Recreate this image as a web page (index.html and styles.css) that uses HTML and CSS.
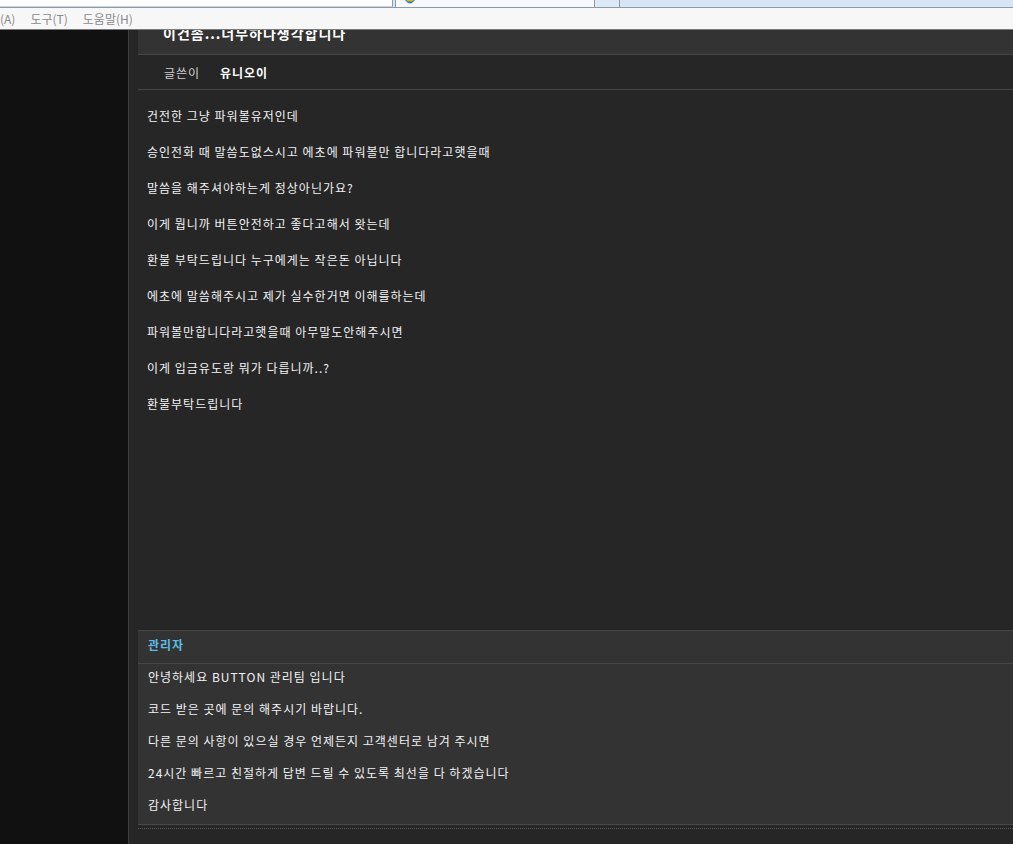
FILE: index.html
```html
<!DOCTYPE html>
<html>
<head>
    <link rel="stylesheet" href="styles.css">
</head>
<body>
    <div class="chrome">
        <div class="address"></div>
        <div class="tab">
            <svg class="tab-icon" width="12" height="6" viewBox="0 0 12 6"><path d="M1 0 Q6 7 11 0" fill="#2f7fd0"/><path d="M2 0 Q6 3 10 0" fill="#f0b400"/></svg>
        </div>
        <div class="tab-new"></div>
        <div class="tab-rest"></div>
    </div>
    <div class="menubar">
        <span class="menu-item first">(A)</span>
        <span class="menu-item">도구(T)</span>
        <span class="menu-item">도움말(H)</span>
    </div>

    <div class="page">
        <div class="sidebar"></div>
        <div class="main">
            <div class="title">
                <h2>이건좀...너무하나생각합니다</h2>
            </div>
            <div class="author">
                <span class="author-label">글쓴이</span>
                <span class="author-name">유니오이</span>
            </div>
            <div class="content">
                <p>건전한 그냥 파워볼유저인데</p>
                <p>승인전화 때 말씀도없스시고 에초에 파워볼만 합니다라고햇을때</p>
                <p>말씀을 해주셔야하는게 정상아닌가요?</p>
                <p>이게 뭡니까 버튼안전하고 좋다고해서 왓는데</p>
                <p>환불 부탁드립니다 누구에게는 작은돈 아닙니다</p>
                <p>에초에 말씀해주시고 제가 실수한거면 이해를하는데</p>
                <p>파워볼만합니다라고햇을때 아무말도안해주시면</p>
                <p>이게 입금유도랑 뭐가 다릅니까..?</p>
                <p>환불부탁드립니다</p>
            </div>
            <div class="reply-wrap">
                <div class="reply">
                    <div class="reply-head">관리자</div>
                    <div class="reply-body">
                        <p>안녕하세요 BUTTON 관리팀 입니다</p>
                        <p>코드 받은 곳에 문의 해주시기 바랍니다.</p>
                        <p>다른 문의 사항이 있으실 경우 언제든지 고객센터로 남겨 주시면</p>
                        <p>24시간 빠르고 친절하게 답변 드릴 수 있도록 최선을 다 하겠습니다</p>
                        <p>감사합니다</p>
                    </div>
                </div>
            </div>
        </div>
    </div>
</body>
</html>
```

FILE: styles.css
```css
body {
    margin: 0;
    font-family: "Noto Sans CJK KR", "Noto Sans", sans-serif;
    font-size: 12px;
    letter-spacing: 1px;
    background-color: #262626;
    overflow: hidden;
}

p {
    margin: 0;
}

/* browser chrome */
.chrome {
    display: flex;
    height: 7px;
    border-bottom: 1px solid #8e9aa6;
    background-color: #d7e4f4;
}

.address {
    width: 392px;
    background-color: #fdfdfd;
    border-right: 1px solid #8e9aa6;
    border-bottom: 1px solid #c9d3de;
    margin-right: 2px;
}

.tab {
    width: 198px;
    background-color: #f7f9fc;
    border-left: 1px solid #8e9aa6;
    border-right: 1px solid #8e9aa6;
    position: relative;
}

.tab-icon {
    position: absolute;
    left: 8px;
    top: 0;
}

.tab-new {
    width: 24px;
    background-color: #dde9f7;
    border-right: 1px solid #8e9aa6;
}

.tab-rest {
    flex: 1;
}

.menubar {
    display: flex;
    align-items: center;
    height: 21px;
    background-color: #f7f7f7;
    border-bottom: 1px solid #7a7a7a;
    color: #8a8a8a;
    letter-spacing: 0;
}

.menu-item {
    margin-left: 15px;
}

.menu-item.first {
    margin-left: 0;
}

/* page */
.page {
    display: flex;
    height: 814px;
}

.sidebar {
    width: 128px;
    background-color: #111111;
    border-right: 1px solid #3e3e3e;
}

.main {
    flex: 1;
    padding-left: 9px;
    background-color: #262626;
    color: #f2f2f2;
}

.title {
    height: 24px;
    background-color: #333333;
    border-bottom: 1px solid #454545;
    overflow: hidden;
    padding-left: 25px;
}

.title h2 {
    margin: -4px 0 0 0;
    font-size: 14px;
    line-height: 14px;
    font-weight: bold;
    color: #ffffff;
}

.author {
    display: flex;
    align-items: center;
    height: 34px;
    border-bottom: 1px solid #454545;
    padding-left: 26px;
}

.author-label {
    color: #cfcfcf;
    width: 56px;
}

.author-name {
    font-weight: bold;
    color: #ffffff;
}

.content {
    height: 540px;
    box-sizing: border-box;
    padding: 17px 0 0 9px;
    line-height: 18px;
}

.content p {
    margin-bottom: 18px;
}

.reply-wrap {
    border-bottom: 1px dotted #5a5a5a;
    padding-bottom: 3px;
}

.reply {
    background-color: #333333;
    border-top: 1px solid #474747;
    border-bottom: 1px solid #474747;
}

.reply-head {
    height: 32px;
    line-height: 28px;
    padding-left: 10px;
    font-weight: bold;
    color: #5bbde6;
    border-bottom: 1px solid #474747;
}

.reply-body {
    padding: 4px 0 10px 10px;
    line-height: 18px;
}

.reply-body p {
    margin-bottom: 14px;
}

.reply-body p:last-child {
    margin-bottom: 0;
}
```
